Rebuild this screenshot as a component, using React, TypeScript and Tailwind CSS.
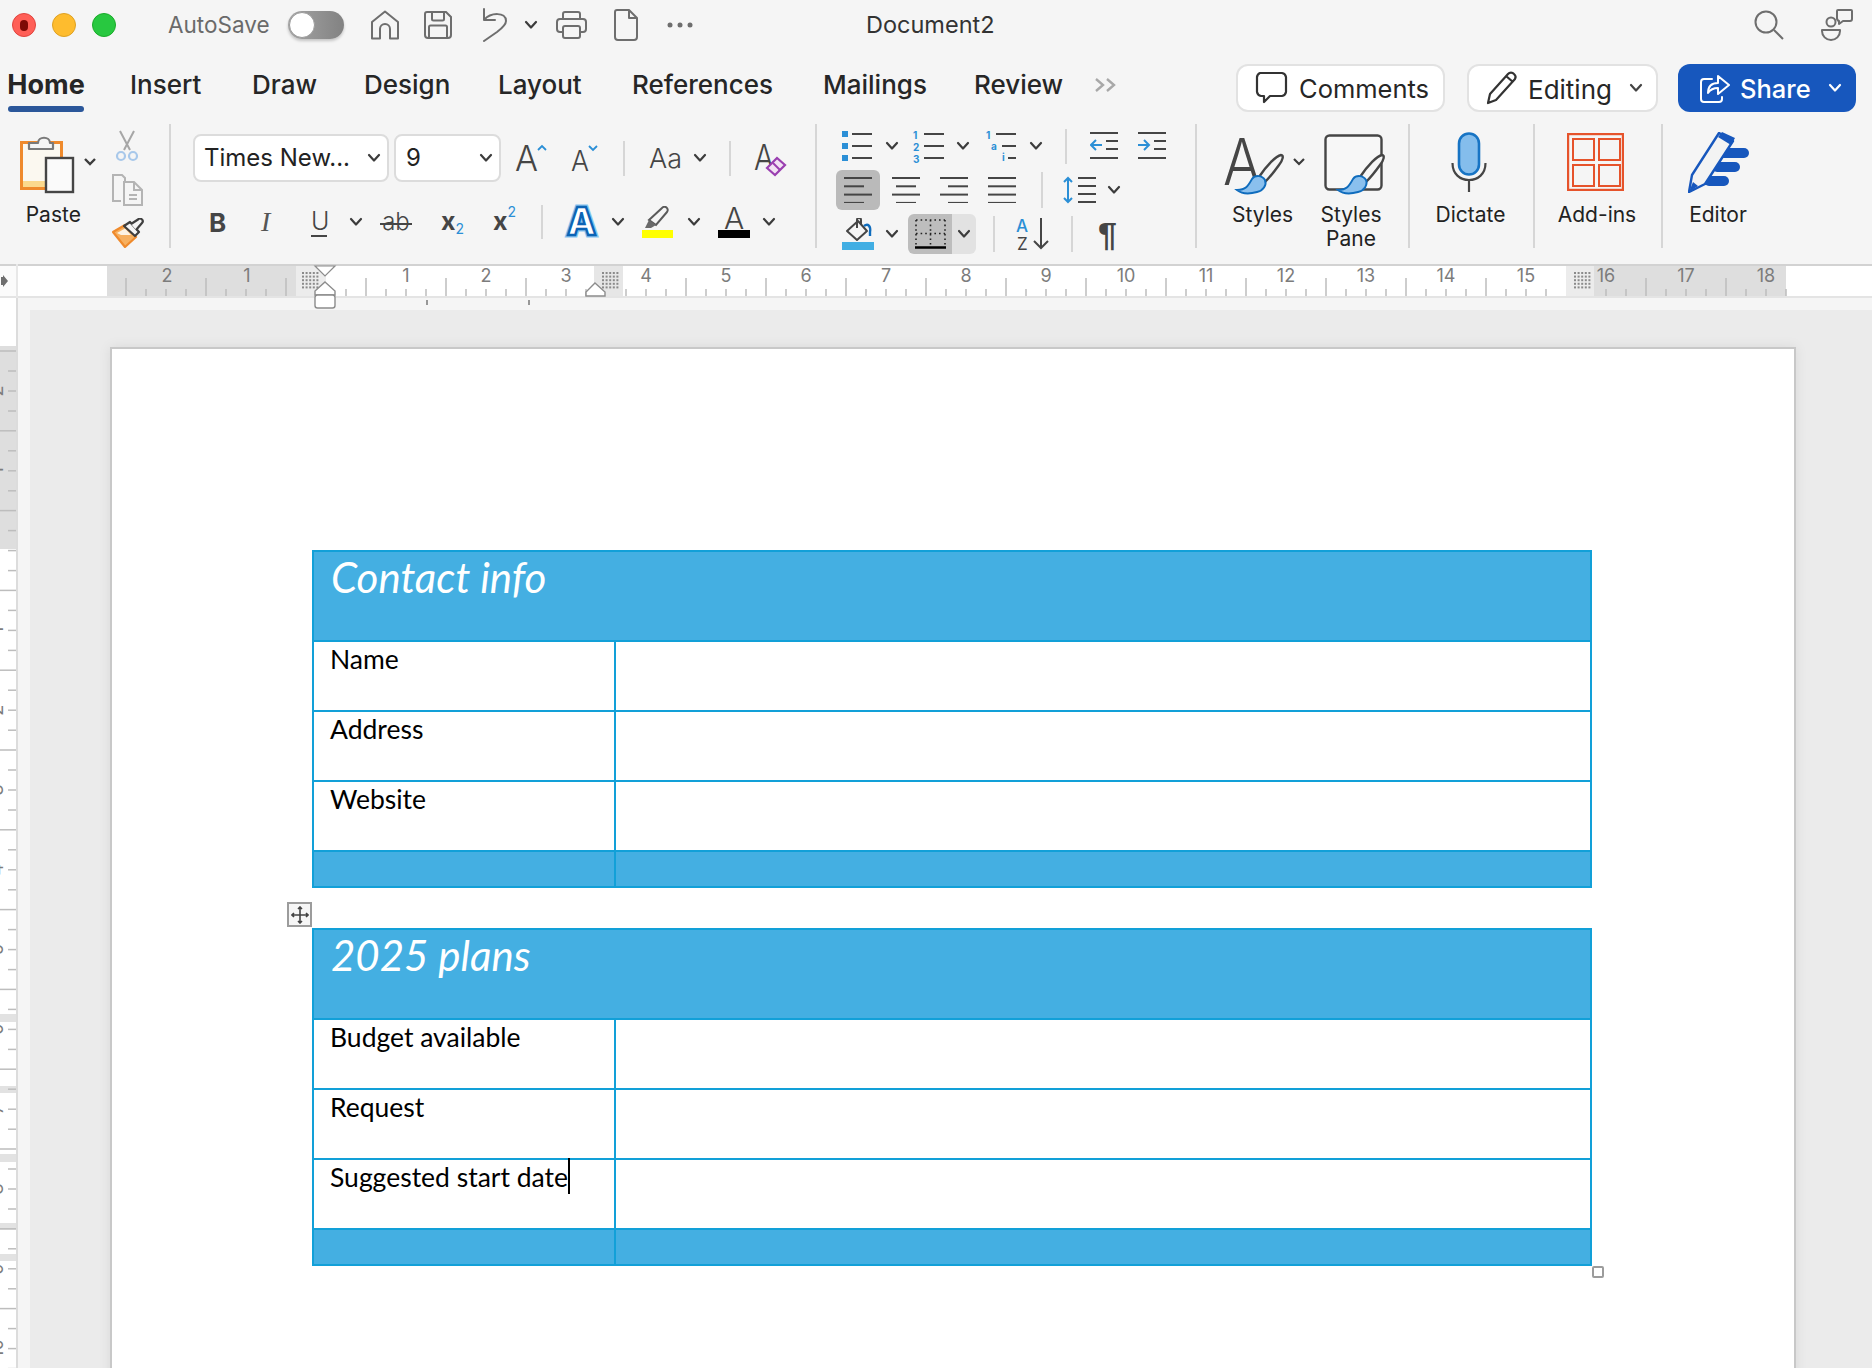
import React from 'react';

const INK = '#454545';
const BLUE = '#2b8fd6';

const Chevron = ({ className = '', color = '#3c3c3c' }: { className?: string; color?: string }) => (
  <svg width="14" height="10" viewBox="0 0 14 10" className={className}>
    <path d="M2 2 L7 7.5 L12 2" fill="none" stroke={color} strokeWidth="2.2" strokeLinecap="round" strokeLinejoin="round" />
  </svg>
);

const Divider = ({ className = '' }: { className?: string }) => <div className={`w-[2px] bg-[#d6d6d6] ${className}`} />;

const Lines = ({ rows, w = 28, gap = 8.3, color = INK }: { rows: number[][]; w?: number; gap?: number; color?: string }) => (
  <svg width={w} height={(rows.length - 1) * gap + 2} className="shrink-0">
    {rows.map((r, i) => (
      <line key={i} x1={r[0]} x2={r[1]} y1={i * gap + 1} y2={i * gap + 1} stroke={color} strokeWidth="2" />
    ))}
  </svg>
);

const Brush = ({ dx = 0, dy = 0 }: { dx?: number; dy?: number }) => (
  <g transform={`translate(${dx} ${dy})`}>
    <path d="M35 43 C43 31 52 22 57 21 C60 21 59 26 55 31 C50 38 46 43 41 48 Z" fill="#f5f5f5" stroke="#454545" strokeWidth="2.4" strokeLinejoin="round" />
    <path d="M13 56 C22 56 24 52 28 45 C31 41 38 41 41 46 C43 51 39 57 33 58 C26 60 18 60 13 56 Z" fill="#8ac0ee" stroke="#0f6cbd" strokeWidth="2" />
  </g>
);

const Ruler = () => {
  const ticks: number[] = [];
  for (let x = 126; x <= 1786; x += 20) {
    if (x >= 296 && x < 345) continue;
    if (x >= 590 && x < 625) continue;
    if (x >= 1566 && x < 1600) continue;
    ticks.push(x);
  }
  const nums: [string, number][] = [['2', 167], ['1', 247]];
  for (let i = 1; i <= 18; i++) nums.push([String(i), 326 + i * 80]);
  const dots = (x0: number) => {
    const out: React.ReactNode[] = [];
    for (let i = 0; i < 5; i++) {
      for (let j = 0; j < 5; j++) {
        out.push(<rect key={`${x0}-${i}-${j}`} x={x0 + i * 3.6} y={8 + j * 3.6} width="2" height="2" fill="#8a8a8a" />);
      }
    }
    return out;
  };
  return (
    <svg width="1872" height="46" className="relative z-10 block shrink-0 overflow-visible">
      <rect x="0" y="0" width="1872" height="34" fill="#ffffff" />
      <rect x="0" y="0" width="17" height="34" fill="#fbfbfb" />
      <rect x="107" y="2" width="189" height="30" fill="#dedede" />
      <rect x="296" y="2" width="30" height="30" fill="#ececec" />
      <rect x="594" y="2" width="29" height="30" fill="#e6e6e6" />
      <rect x="1566" y="2" width="28" height="30" fill="#ececec" />
      <rect x="1594" y="2" width="192" height="30" fill="#dedede" />
      <rect x="0" y="0" width="1872" height="2" fill="#d2d2d2" />
      <rect x="0" y="32" width="1872" height="2" fill="#e4e4e4" />
      <rect x="16" y="0" width="2" height="34" fill="#e8e8e8" />
      {ticks.map((x) => {
        const tall = Math.abs(x - 326) % 80 === 40;
        return <line key={x} x1={x} x2={x} y1={tall ? 14 : 25} y2="32" stroke="#bdbdbd" strokeWidth="1.5" />;
      })}
      {nums.map(([n, x], i) => (
        <text key={i} x={x} y="18" textAnchor="middle" fontSize="18" fill="#7c7c7c" fontFamily="Inter, sans-serif">{n}</text>
      ))}
      {dots(302)}
      {dots(602)}
      {dots(1574)}
      <path d="M1 13 L3 13 L3 11 L8 17 L3 23 L3 21 L1 21 Z" fill="#6e6e6e" />
      <path d="M315 2 L335 2 L325 12 Z" fill="#fff" stroke="#8c8c8c" strokeWidth="1.2" />
      <path d="M325 18 L335 27 L335 31 L315 31 L315 27 Z" fill="#fff" stroke="#8c8c8c" strokeWidth="1.4" />
      <rect x="315" y="31" width="20" height="13" rx="2.5" fill="#fff" stroke="#8c8c8c" strokeWidth="1.4" />
      <path d="M595 19 L605 28 L605 32 L586 32 L586 28 Z" fill="#fff" stroke="#8c8c8c" strokeWidth="1.4" />
      <line x1="427" x2="427" y1="36" y2="41" stroke="#777" strokeWidth="1.5" />
      <line x1="529" x2="529" y1="36" y2="41" stroke="#777" strokeWidth="1.5" />
    </svg>
  );
};

const SideRuler = () => {
  const base = 298;
  const long: number[] = [];
  const short: number[] = [];
  for (let i = 0; i < 14; i++) {
    const y = 351 + i * 79.8 - base;
    long.push(y);
    short.push(y + 20, y + 40, y + 60);
  }
  const labels = ['2', '1', '', '1', '2', '3', '4', '5', '6', '7', '8', '9', '10'];
  const bands = [[1014, 8], [1086, 7], [1154, 8], [1223, 7], [1254, 7]];
  return (
    <svg width="18" height="1070" className="block shrink-0">
      <rect width="16" height="1070" fill="#ffffff" />
      <rect y={346 - base} width="16" height="203" fill="#dedede" />
      {bands.map(([y, h]) => (
        <rect key={y} y={y - base} width="18" height={h} fill="#e2e2e2" />
      ))}
      <rect x="16" width="2" height="1070" fill="#dcdcdc" />
      {long.map((y) => (
        <line key={y} x1="0" x2="16" y1={y} y2={y} stroke="#bdbdbd" strokeWidth="1.5" />
      ))}
      {short.map((y) => (
        <line key={y} x1="8" x2="16" y1={y} y2={y} stroke="#bdbdbd" strokeWidth="1.5" />
      ))}
      {labels.map((l, i) =>
        l ? (
          <text key={i} transform={`translate(3 ${391 + i * 79.8 - base}) rotate(-90)`} textAnchor="middle" fontSize="18" fill="#7c7c7c" fontFamily="Inter, sans-serif">{l}</text>
        ) : null,
      )}
    </svg>
  );
};

const TitleBar = () => (
  <div className="flex h-[50px] shrink-0 items-center pl-[12px] pr-[19px]">
    <div className="flex h-[24px] w-[24px] items-center justify-center rounded-full border border-[#e0443e] bg-[#ff5f57]">
      <div className="h-[11px] w-[8px] rounded-full bg-[#7d0a06]" />
    </div>
    <div className="ml-[16px] h-[24px] w-[24px] rounded-full border border-[#dea123] bg-[#febc2e]" />
    <div className="ml-[16px] h-[24px] w-[24px] rounded-full border border-[#1aab29] bg-[#28c840]" />
    <span className="ml-[52px] w-[100px] text-[22.5px] whitespace-nowrap text-[#6a6a6a]">AutoSave</span>
    <div className="ml-[20px] flex h-[28px] w-[56px] items-center rounded-full bg-gradient-to-r from-[#a5a5a5] to-[#828282] shadow-[0_2px_3px_rgba(0,0,0,0.2)]">
      <div className="ml-[1px] h-[26px] w-[26px] rounded-full border border-[#9a9a9a] bg-white" />
    </div>
    <svg width="30" height="30" viewBox="0 0 30 30" className="ml-[26px]">
      <path d="M2 28.5 V12 L15 1.5 L28 12 V28.5 H20 V19 a5 5 0 0 0 -10 0 V28.5 Z" fill="none" stroke="#6e6e6e" strokeWidth="2" strokeLinejoin="round" />
    </svg>
    <svg width="28" height="28" viewBox="0 0 28 28" className="ml-[24px]">
      <path d="M3 1 H22 L27 6 V24 a3 3 0 0 1 -3 3 H4 a3 3 0 0 1 -3 -3 V3 a2 2 0 0 1 2 -2 Z" fill="none" stroke="#6e6e6e" strokeWidth="2" />
      <path d="M8 1 V8 a1.5 1.5 0 0 0 1.5 1.5 H18.5 a1.5 1.5 0 0 0 1.5 -1.5 V1 M5 27 V16 a1.5 1.5 0 0 1 1.5 -1.5 H21.5 a1.5 1.5 0 0 1 1.5 1.5 V27" fill="none" stroke="#6e6e6e" strokeWidth="2" />
    </svg>
    <svg width="28" height="34" viewBox="0 0 28 34" className="ml-[28px]">
      <path d="M9 1 V12 H20 M9 12 C16 4 31 4 31 13 C31 17 26 21 22 24 L9 33" fill="none" stroke="#6e6e6e" strokeWidth="2" strokeLinecap="round" strokeLinejoin="round" transform="translate(-5 0)" />
    </svg>
    <Chevron className="ml-[16px]" />
    <svg width="31" height="28" viewBox="0 0 31 28" className="ml-[18px]">
      <path d="M7 8 V3 a2 2 0 0 1 2 -2 H22 a2 2 0 0 1 2 2 V8" fill="none" stroke="#6e6e6e" strokeWidth="2" />
      <path d="M7 21 H4 a3 3 0 0 1 -3 -3 V11 a3 3 0 0 1 3 -3 H27 a3 3 0 0 1 3 3 V18 a3 3 0 0 1 -3 3 H24" fill="none" stroke="#6e6e6e" strokeWidth="2" />
      <rect x="7" y="15" width="17" height="12" rx="2" fill="none" stroke="#6e6e6e" strokeWidth="2" />
    </svg>
    <svg width="24" height="32" viewBox="0 0 24 32" className="ml-[27px]">
      <path d="M3 1 H15 L23 9 V28 a3 3 0 0 1 -3 3 H4 a3 3 0 0 1 -3 -3 V3 a2 2 0 0 1 2 -2 Z M15 1 V9 H23" fill="none" stroke="#6e6e6e" strokeWidth="2" strokeLinejoin="round" />
    </svg>
    <svg width="26" height="6" viewBox="0 0 26 6" className="ml-[29px]">
      <circle cx="3" cy="3" r="2.5" fill="#6e6e6e" />
      <circle cx="13" cy="3" r="2.5" fill="#6e6e6e" />
      <circle cx="23" cy="3" r="2.5" fill="#6e6e6e" />
    </svg>
    <span className="ml-[173px] w-[130px] text-[23.5px] whitespace-nowrap text-[#333]">Document2</span>
    <svg width="30" height="30" viewBox="0 0 30 30" className="ml-auto">
      <circle cx="12" cy="12" r="10.5" fill="none" stroke="#6e6e6e" strokeWidth="2" />
      <line x1="20" y1="20" x2="29" y2="29" stroke="#6e6e6e" strokeWidth="2" />
    </svg>
    <svg width="32" height="32" viewBox="0 0 32 32" className="ml-[37px]">
      <circle cx="10" cy="13" r="4.5" fill="none" stroke="#6e6e6e" strokeWidth="2" />
      <path d="M1 21 H19 V22 a9 9 0 0 1 -18 0 Z" fill="none" stroke="#6e6e6e" strokeWidth="2" strokeLinejoin="round" />
      <path d="M17 1 H30 a1 1 0 0 1 1 1 V10 a2 2 0 0 1 -2 2 H22 L18 15 V12 a3 3 0 0 1 -2 -3 V2 a1 1 0 0 1 1 -1 Z" fill="#f5f5f5" stroke="#6e6e6e" strokeWidth="2" strokeLinejoin="round" />
    </svg>
  </div>
);

const TabsBar = () => (
  <div className="flex h-[62px] shrink-0 pr-[16px] text-[#262626]">
    <div className="ml-[8px] flex w-[76px] flex-col items-center">
      <span className="mt-[19px] text-[27px] leading-[32px] font-bold">Home</span>
      <div className="mt-auto h-[6px] w-full rounded-full bg-[#2b579a]" />
    </div>
    <span className="mt-[19px] ml-[46px] w-[72px] text-[26px] leading-[32px] font-medium whitespace-nowrap">Insert</span>
    <span className="mt-[19px] ml-[50px] w-[63px] text-[26px] leading-[32px] font-medium whitespace-nowrap">Draw</span>
    <span className="mt-[19px] ml-[49px] w-[86px] text-[26px] leading-[32px] font-medium whitespace-nowrap">Design</span>
    <span className="mt-[19px] ml-[48px] w-[83px] text-[26px] leading-[32px] font-medium whitespace-nowrap">Layout</span>
    <span className="mt-[19px] ml-[51px] w-[139px] text-[26px] leading-[32px] font-medium whitespace-nowrap">References</span>
    <span className="mt-[19px] ml-[52px] w-[102px] text-[26px] leading-[32px] font-medium whitespace-nowrap">Mailings</span>
    <span className="mt-[19px] ml-[49px] w-[88px] text-[26px] leading-[32px] font-medium whitespace-nowrap">Review</span>
    <svg width="24" height="16" viewBox="0 0 24 16" className="mt-[27px] ml-[32px]">
      <path d="M2 2 L9 8 L2 14 M13 2 L20 8 L13 14" fill="none" stroke="#a8a8a8" strokeWidth="2.4" />
    </svg>
    <div className="mt-[14px] ml-auto flex h-[48px] w-[209px] items-center rounded-[12px] border-2 border-[#e2e2e2] bg-white pl-[17px] text-[25.5px] text-[#262626]">
      <svg width="34" height="36" viewBox="0 0 34 36">
        <path d="M5 3 H27 a5 5 0 0 1 4 4 V22 a5 5 0 0 1 -4 4 H15 L9 32 V26 H6 a5 5 0 0 1 -4 -4 V7 a5 5 0 0 1 3 -4 Z" fill="none" stroke="#333" strokeWidth="2.2" strokeLinejoin="round" />
      </svg>
      <span className="mt-[2px] ml-[10px] whitespace-nowrap">Comments</span>
    </div>
    <div className="mt-[14px] ml-[22px] flex h-[48px] w-[191px] items-center rounded-[12px] border-2 border-[#e2e2e2] bg-white pl-[17px] text-[26px] text-[#262626]">
      <svg width="32" height="34" viewBox="0 0 32 34">
        <path d="M2 32 L4 23 L22 3 a4 4 0 0 1 6 0 a4 4 0 0 1 1 5 L10 29 Z M20 5 L27 11" fill="none" stroke="#333" strokeWidth="2.2" strokeLinejoin="round" />
      </svg>
      <span className="mt-[2px] ml-[10px] whitespace-nowrap">Editing</span>
      <Chevron className="ml-[17px]" color="#444" />
    </div>
    <div className="mt-[14px] ml-[20px] flex h-[48px] w-[178px] items-center rounded-[12px] bg-[#1757bd] pl-[22px] text-[25.5px] font-medium text-white">
      <svg width="30" height="30" viewBox="0 0 30 30">
        <path d="M12 6 H4 a3 3 0 0 0 -3 3 V26 a3 3 0 0 0 3 3 H19 a3 3 0 0 0 3 -3 V24" fill="none" stroke="#fff" strokeWidth="2" strokeLinecap="round" />
        <path d="M8 20 C8 13 12 10 18 10 V3 L29 12 L18 21 V15 C13 15 10 17 8 20 Z" fill="none" stroke="#fff" strokeWidth="2" strokeLinejoin="round" />
      </svg>
      <span className="mt-[2px] ml-[10px] whitespace-nowrap">Share</span>
      <Chevron className="ml-[17px]" color="#fff" />
    </div>
  </div>
);

const ClipboardGroup = () => (
  <div className="flex w-[171px] shrink-0">
    <div className="flex w-[108px] flex-col">
      <svg width="80" height="71" viewBox="0 0 80 71" className="mt-[20px] ml-[18px]">
        <rect x="3.5" y="10.5" width="40" height="46" fill="#fbd98d" stroke="#ef8a2c" strokeWidth="3" />
        <rect x="5" y="12" width="37" height="37" fill="#fbf8f0" />
        <path d="M11 11 H20 C20 4 32 4 32 11 H35 V17 H11 Z" fill="#f5f5f5" stroke="#7a7a7a" strokeWidth="2.2" strokeLinejoin="round" />
        <rect x="28" y="26" width="27" height="34" fill="#fafafa" stroke="#454545" strokeWidth="2.4" />
        <path d="M67 27 L72 32 L77 27" fill="none" stroke="#3c3c3c" strokeWidth="2.4" />
      </svg>
      <span className="text-center text-[21px] leading-[24px] text-[#222]">Paste</span>
    </div>
    <div className="flex w-[40px] flex-col pt-[18px]">
      <svg width="32" height="32" viewBox="0 0 32 32" className="ml-[4px]">
        <path d="M9 1 L19 20 M23 1 L13 20" stroke="#a6a6a6" strokeWidth="2" />
        <circle cx="10" cy="26" r="4" fill="none" stroke="#a8c8ea" strokeWidth="2.2" />
        <circle cx="22" cy="26" r="4" fill="none" stroke="#a8c8ea" strokeWidth="2.2" />
      </svg>
      <svg width="32" height="32" viewBox="0 0 32 32" className="mt-[12px] ml-[4px]">
        <path d="M10 27 H2 V1 H11 L14 4 V8" fill="none" stroke="#b4b4b4" strokeWidth="2" />
        <path d="M13 8 H23 L31 16 V31 H13 Z M23 8 V16 H31 M18 21 H26 M18 25 H26" fill="#f5f5f5" stroke="#b4b4b4" strokeWidth="2" />
      </svg>
      <svg width="32" height="30" viewBox="0 0 32 30" className="mt-[12px] ml-[5px]">
        <path d="M1 14 L13 7 L24 19 L13 29 Z" fill="#f7b05f" stroke="#ef8a2c" strokeWidth="2.2" strokeLinejoin="round" />
        <path d="M5 15 L13 10.5 L19 17 L9 17 Z" fill="#fdf3e3" />
        <path d="M12 8 L18 4 L27 14 L23 18 Z" fill="#f5f5f5" stroke="#3f3f3f" strokeWidth="2.2" strokeLinejoin="round" />
        <path d="M19 6 L26 1.5 a2.5 2.5 0 0 1 4 3.5 L24 12" fill="#f5f5f5" stroke="#3f3f3f" strokeWidth="2.2" strokeLinejoin="round" />
      </svg>
    </div>
    <Divider className="mt-[12px] ml-[23px] h-[124px]" />
  </div>
);

const SelectBox = ({ label, className }: { label: string; className: string }) => (
  <div className={`flex h-[48px] items-center justify-between rounded-[8px] border-2 border-[#dcdcdc] bg-white ${className}`}>
    <span className="text-[24px] whitespace-nowrap text-[#222]">{label}</span>
    <Chevron />
  </div>
);

const FontGroup = () => (
  <div className="ml-[2px] flex w-[642px] shrink-0 flex-col">
    <div className="mt-[22px] flex h-[48px] items-center">
      <SelectBox label="Times New..." className="ml-[20px] w-[196px] pr-[6px] pl-[9px]" />
      <SelectBox label="9" className="ml-[5px] w-[107px] pr-[6px] pl-[10px]" />
      <svg width="32" height="28" viewBox="0 0 32 28" className="ml-[14px] overflow-visible">
        <text x="0" y="27" fontSize="36" fontWeight="300" fill={INK} fontFamily="Inter, sans-serif" textLength="23" lengthAdjust="spacingAndGlyphs">A</text>
        <path d="M23 6 L27 2 L31 6" fill="none" stroke={BLUE} strokeWidth="1.8" />
      </svg>
      <svg width="28" height="28" viewBox="0 0 28 28" className="ml-[24px] overflow-visible">
        <text x="0" y="27" fontSize="29" fontWeight="300" fill={INK} fontFamily="Inter, sans-serif" textLength="18" lengthAdjust="spacingAndGlyphs">A</text>
        <path d="M18 2 L22 6 L26 2" fill="none" stroke={BLUE} strokeWidth="1.8" />
      </svg>
      <Divider className="ml-[24px] h-[35px]" />
      <span className="mt-[3px] ml-[24px] w-[32px] text-[27px] font-light whitespace-nowrap text-[#454545]">Aa</span>
      <Chevron className="ml-[12px]" />
      <Divider className="ml-[22px] h-[35px]" />
      <svg width="34" height="34" viewBox="0 0 34 34" className="mt-[6px] ml-[23px] overflow-visible">
        <text x="0" y="26" fontSize="36" fontWeight="300" fill={INK} fontFamily="Inter, sans-serif" textLength="20" lengthAdjust="spacingAndGlyphs">A</text>
        <path d="M13 24 L23 14 L31 21 L21 31 Z" fill="#f2e3f4" stroke="#9a3fb0" strokeWidth="2.2" />
        <path d="M19 19 L26 26" stroke="#9a3fb0" strokeWidth="2" />
      </svg>
    </div>
    <div className="mt-[20px] flex h-[40px] items-center">
      <span className="ml-[36px] w-[15px] text-[26px] font-bold text-[#454545]">B</span>
      <span className="ml-[37px] w-[14px] font-['Liberation_Serif',serif] text-[28px] text-[#555] italic">I</span>
      <span className="ml-[36px] w-[16px] border-b-2 border-[#454545] text-center text-[25px] leading-[27px] font-light text-[#454545]">U</span>
      <Chevron className="ml-[22px]" />
      <span className="relative ml-[17px] w-[32px] text-center text-[24px] font-light text-[#454545]">
        ab
        <span className="absolute top-[19px] left-0 h-[2px] w-[32px] bg-[#454545]" />
      </span>
      <span className="ml-[29px] flex w-[21px] items-baseline text-[25px] font-bold text-[#454545]">
        x<sub className="text-[14px] font-normal text-[#2b8fd6]">2</sub>
      </span>
      <span className="ml-[31px] flex w-[21px] items-start text-[25px] font-bold text-[#454545]">
        x<sup className="top-[9px] text-[14px] font-normal text-[#2b8fd6]">2</sup>
      </span>
      <Divider className="ml-[27px] h-[34px]" />
      <svg width="31" height="32" viewBox="0 0 31 32" className="ml-[23px] overflow-visible">
        <text x="15.5" y="29" textAnchor="middle" fontSize="38" fontWeight="800" fill="#fff" stroke="#86c4ef" strokeWidth="5" fontFamily="Inter, sans-serif">A</text>
        <text x="15.5" y="29" textAnchor="middle" fontSize="38" fontWeight="800" fill="#fff" stroke="#0c64b5" strokeWidth="2.4" fontFamily="Inter, sans-serif">A</text>
      </svg>
      <Chevron className="ml-[14px]" />
      <svg width="31" height="32" viewBox="0 0 31 32" className="ml-[17px]">
        <path d="M7 14 L20 2 a3 3 0 0 1 5 4 L14 19 Z" fill="#f5f5f5" stroke="#5a5a5a" strokeWidth="2" />
        <path d="M7 14 L14 19 L9 22 H3 Z" fill="#6a6a6a" />
        <rect x="0" y="24" width="31" height="8" fill="#ffff00" />
      </svg>
      <Chevron className="ml-[14px]" />
      <svg width="32" height="32" viewBox="0 0 32 32" className="ml-[17px] overflow-visible">
        <text x="16" y="23" textAnchor="middle" fontSize="30" fontWeight="300" fill={INK} fontFamily="Inter, sans-serif">A</text>
        <rect x="0" y="24" width="32" height="8" fill="#000" />
      </svg>
      <Chevron className="ml-[12px]" />
    </div>
  </div>
);

const ParagraphGroup = () => (
  <div className="flex w-[378px] shrink-0 flex-col">
    <div className="mt-[16px] flex h-[36px] items-center">
      <svg width="30" height="30" className="ml-[25px]">
        {[0, 12, 24].map((y) => (
          <g key={y}>
            <rect x="0" y={y} width="6" height="6" fill={BLUE} />
            <line x1="10" x2="30" y1={y + 3} y2={y + 3} stroke={INK} strokeWidth="2" />
          </g>
        ))}
      </svg>
      <Chevron className="ml-[13px]" />
      <svg width="31" height="34" className="ml-[14px] overflow-visible">
        {['1', '2', '3'].map((n, i) => (
          <g key={n}>
            <text x="0" y={10 + i * 12} fontSize="10" fontWeight="700" fill={BLUE} fontFamily="Inter, sans-serif">{n}</text>
            <line x1="11" x2="31" y1={5 + i * 12} y2={5 + i * 12} stroke={INK} strokeWidth="2" />
          </g>
        ))}
      </svg>
      <Chevron className="ml-[12px]" />
      <svg width="30" height="34" className="ml-[16px] overflow-visible">
        <text x="0" y="10" fontSize="10" fontWeight="700" fill={BLUE} fontFamily="Inter, sans-serif">1</text>
        <line x1="10" x2="30" y1="5" y2="5" stroke={INK} strokeWidth="2" />
        <text x="5" y="21" fontSize="10" fontWeight="700" fill={BLUE} fontFamily="Inter, sans-serif">a</text>
        <line x1="16" x2="30" y1="17" y2="17" stroke={INK} strokeWidth="2" />
        <text x="16" y="32" fontSize="10" fontWeight="700" fill={BLUE} fontFamily="Inter, sans-serif">i</text>
        <line x1="22" x2="30" y1="29" y2="29" stroke={INK} strokeWidth="2" />
      </svg>
      <Chevron className="ml-[13px]" />
      <Divider className="ml-[22px] h-[35px]" />
      <svg width="28" height="28" className="ml-[23px]">
        <line x1="0" x2="28" y1="1" y2="1" stroke={INK} strokeWidth="2" />
        <line x1="16" x2="28" y1="9" y2="9" stroke={INK} strokeWidth="2" />
        <line x1="16" x2="28" y1="17" y2="17" stroke={INK} strokeWidth="2" />
        <line x1="0" x2="28" y1="26" y2="26" stroke={INK} strokeWidth="2" />
        <path d="M12 13 H1 M6 8 L1 13 L6 18" fill="none" stroke={BLUE} strokeWidth="2" />
      </svg>
      <svg width="28" height="28" className="ml-[20px]">
        <line x1="0" x2="28" y1="1" y2="1" stroke={INK} strokeWidth="2" />
        <line x1="16" x2="28" y1="9" y2="9" stroke={INK} strokeWidth="2" />
        <line x1="16" x2="28" y1="17" y2="17" stroke={INK} strokeWidth="2" />
        <line x1="0" x2="28" y1="26" y2="26" stroke={INK} strokeWidth="2" />
        <path d="M0 13 H11 M6 8 L11 13 L6 18" fill="none" stroke={BLUE} strokeWidth="2" />
      </svg>
    </div>
    <div className="mt-[6px] flex h-[40px] items-center">
      <div className="ml-[19px] flex h-[40px] w-[44px] items-center justify-center rounded-[6px] bg-[#bababa]">
        <Lines rows={[[0, 28], [0, 20], [0, 28], [0, 20]]} />
      </div>
      <div className="ml-[12px]"><Lines rows={[[0, 28], [4, 24], [0, 28], [4, 24]]} /></div>
      <div className="ml-[20px]"><Lines rows={[[0, 28], [8, 28], [0, 28], [8, 28]]} /></div>
      <div className="ml-[20px]"><Lines rows={[[0, 28], [0, 28], [0, 28], [0, 28]]} /></div>
      <Divider className="ml-[25px] h-[36px]" />
      <svg width="33" height="28" className="ml-[20px]">
        <path d="M5 2 V26 M1 6 L5 2 L9 6 M1 22 L5 26 L9 22" fill="none" stroke={BLUE} strokeWidth="2" />
        <line x1="15" x2="33" y1="2" y2="2" stroke={INK} strokeWidth="2" />
        <line x1="15" x2="33" y1="10" y2="10" stroke={INK} strokeWidth="2" />
        <line x1="15" x2="33" y1="18" y2="18" stroke={INK} strokeWidth="2" />
        <line x1="15" x2="33" y1="26" y2="26" stroke={INK} strokeWidth="2" />
      </svg>
      <Chevron className="ml-[11px]" />
    </div>
    <div className="mt-[4px] flex h-[40px] items-center">
      <svg width="32" height="32" viewBox="0 0 32 32" className="ml-[25px]">
        <path d="M5 13 L16 3 L25 13 L15 22 Z" fill="#f5f5f5" stroke={INK} strokeWidth="2" strokeLinejoin="round" />
        <path d="M15 10 V2 a2 2 0 0 1 4 0 V7" fill="none" stroke={INK} strokeWidth="2" />
        <path d="M22 8 C26 5 29 8 28 14 V18" fill="none" stroke="#0f6cbd" strokeWidth="2.4" />
        <rect x="0" y="24" width="32" height="8" fill="#41aee3" />
      </svg>
      <Chevron className="ml-[11px]" />
      <div className="ml-[9px] flex h-[40px] w-[68px] overflow-hidden rounded-[6px]">
        <div className="flex w-[44px] items-center justify-center bg-[#bdbdbd]">
          <svg width="31" height="30" viewBox="0 0 31 30">
            <path d="M1 1 H30 M1 1 V28 M30 1 V28 M1 14.5 H30 M15.5 1 V28" fill="none" stroke="#222" strokeWidth="1.6" strokeDasharray="1.6 3" />
            <line x1="0" x2="31" y1="28.5" y2="28.5" stroke="#000" strokeWidth="2.4" />
          </svg>
        </div>
        <div className="flex w-[24px] items-center justify-center bg-[#e2e2e2]">
          <Chevron />
        </div>
      </div>
      <Divider className="ml-[17px] h-[36px]" />
      <svg width="32" height="34" viewBox="0 0 32 34" className="ml-[21px] overflow-visible">
        <text x="0" y="15" fontSize="17" fontWeight="500" fill={BLUE} fontFamily="Inter, sans-serif">A</text>
        <text x="1" y="33" fontSize="17" fontWeight="400" fill={INK} fontFamily="Inter, sans-serif">Z</text>
        <path d="M25 1 V31 M18 24 L25 31 L32 24" fill="none" stroke={INK} strokeWidth="2" />
      </svg>
      <Divider className="ml-[23px] h-[36px]" />
      <span className="ml-[25px] font-['Liberation_Sans',sans-serif] text-[34px] leading-none font-bold text-[#454545]">¶</span>
    </div>
  </div>
);

const RibbonLabel = ({ children, className = '' }: { children: React.ReactNode; className?: string }) => (
  <span className={`text-[21px] leading-[24px] text-[#222] ${className}`}>{children}</span>
);

const Ribbon = () => (
  <div className="flex h-[152px] shrink-0">
    <ClipboardGroup />
    <FontGroup />
    <Divider className="mt-[12px] h-[124px]" />
    <ParagraphGroup />
    <Divider className="mt-[12px] h-[124px]" />
    <div className="flex w-[211px] shrink-0">
      <div className="flex w-[116px] flex-col">
        <div className="h-[91px] pt-[22px] pl-[27px]">
          <svg width="82" height="62" viewBox="0 0 82 62" className="overflow-visible">
            <text x="-1" y="51" fontSize="64" fontWeight="300" fill={INK} fontFamily="Inter, sans-serif" textLength="38" lengthAdjust="spacingAndGlyphs">A</text>
            <Brush />
            <path d="M70 25 L75 30 L80 25" fill="none" stroke="#3c3c3c" strokeWidth="2.2" />
          </svg>
        </div>
        <RibbonLabel className="ml-[35px]">Styles</RibbonLabel>
      </div>
      <div className="flex w-[95px] flex-col">
        <div className="h-[91px] pt-[22px] pl-[11px]">
          <svg width="64" height="62" viewBox="0 0 64 62">
            <rect x="1.5" y="1.5" width="56" height="54" rx="4" fill="#f7f7f7" stroke={INK} strokeWidth="2.4" />
            <Brush dx="1" />
          </svg>
        </div>
        <RibbonLabel className="w-[76px] text-center">Styles Pane</RibbonLabel>
      </div>
    </div>
    <Divider className="mt-[12px] h-[124px]" />
    <div className="flex w-[123px] shrink-0 flex-col items-center">
      <div className="-ml-[5px] h-[91px] pt-[20px]">
        <svg width="36" height="61" viewBox="0 0 36 61">
          <rect x="8" y="1.5" width="20" height="41" rx="10" fill="#84bdec" stroke="#1774c4" strokeWidth="2.6" />
          <path d="M1.5 31 C1.5 42 9 48 18 48 C27 48 34.5 42 34.5 31 M18 48 V60" fill="none" stroke={INK} strokeWidth="2.2" />
        </svg>
      </div>
      <RibbonLabel className="-ml-[2px]">Dictate</RibbonLabel>
    </div>
    <Divider className="mt-[12px] h-[124px]" />
    <div className="flex w-[126px] shrink-0 flex-col items-center">
      <div className="-ml-[6px] h-[91px] pt-[21px]">
        <svg width="57" height="58" viewBox="0 0 57 58">
          <rect x="1" y="1" width="55" height="56" fill="none" stroke="#e6532b" strokeWidth="2.4" />
          <rect x="6" y="6" width="21" height="21" fill="none" stroke="#e6532b" strokeWidth="2" />
          <rect x="32" y="6" width="21" height="21" fill="none" stroke="#e6532b" strokeWidth="2" />
          <rect x="6" y="32" width="21" height="21" fill="none" stroke="#e6532b" strokeWidth="2" />
          <rect x="32" y="32" width="21" height="21" fill="none" stroke="#e6532b" strokeWidth="2" />
        </svg>
      </div>
      <RibbonLabel className="-ml-[2px]">Add-ins</RibbonLabel>
    </div>
    <Divider className="mt-[12px] h-[124px]" />
    <div className="flex w-[110px] shrink-0 flex-col items-center">
      <div className="h-[91px] pt-[20px]">
        <svg width="61" height="61" viewBox="0 0 61 61">
          <rect x="30" y="16" width="31" height="10" rx="5" fill="#1757bd" />
          <rect x="24" y="30" width="28" height="10" rx="5" fill="#1757bd" />
          <rect x="16" y="44" width="25" height="10" rx="5" fill="#1757bd" />
          <path d="M1 60 L4 43 L31 1 L45 9 L17 52 Z" fill="#f3f3f3" stroke="#1757bd" strokeWidth="2.4" strokeLinejoin="round" />
          <path d="M34 0 L47 6 L43 13 L30 5 Z" fill="#1757bd" />
          <path d="M1 60 L5 50 L10 54 Z" fill="#1757bd" />
        </svg>
      </div>
      <RibbonLabel>Editor</RibbonLabel>
    </div>
  </div>
);

const Row = ({ label, caret = false }: { label: string; caret?: boolean }) => (
  <div className="flex h-[70px] border-t-2 border-[#12a0d8]">
    <div className="w-[302px] border-r-2 border-[#12a0d8] pt-[1px] pl-[16px] text-[26.5px] leading-[32px] text-black">
      <span className="relative">
        {label}
        {caret && <span className="absolute top-[-3px] left-full h-[36px] w-[2px] bg-black" />}
      </span>
    </div>
  </div>
);

const InfoTable = ({ title, rows, caretRow }: { title: string; rows: string[]; caretRow?: number }) => (
  <div className="w-[1280px] border-2 border-[#12a0d8]">
    <div className="h-[88px] bg-[#44afe2] pt-[1px] pl-[17px] text-[42px] leading-[48px] font-normal text-white italic">{title}</div>
    {rows.map((r, i) => (
      <Row key={r} label={r} caret={i === caretRow} />
    ))}
    <div className="flex h-[36px] border-t-2 border-[#12a0d8] bg-[#44afe2]">
      <div className="w-[302px] border-r-2 border-[#12a0d8]" />
    </div>
  </div>
);

export default function App() {
  return (
    <div className="flex h-[1368px] w-[1872px] flex-col overflow-hidden bg-[#f5f5f5] font-['Inter',sans-serif]">
      <TitleBar />
      <TabsBar />
      <Ribbon />
      <Ruler />
      <div className="-mt-[12px] flex flex-1 overflow-hidden">
        <SideRuler />
        <div className="mt-[12px] ml-[12px] flex-1 bg-[#ebebeb] pt-[37px] pl-[80px]">
          <div className="relative h-[1100px] w-[1686px] border-2 border-[#c8c8c8] bg-white pt-[201px] pl-[200px] font-['Lato',sans-serif] shadow-[0_0_12px_rgba(0,0,0,0.08)]">
            <InfoTable title="Contact info" rows={['Name', 'Address', 'Website']} />
            <div className="relative mt-[40px] w-[1280px]">
              <InfoTable title="2025 plans" rows={['Budget available', 'Request', 'Suggested start date']} caretRow={2} />
              <div className="absolute -top-[26px] -left-[25px] flex h-[25px] w-[25px] items-center justify-center border-2 border-[#9c9c9c] bg-[#f6f6f6]">
                <svg width="18" height="18" viewBox="0 0 18 18">
                  <path d="M9 1 V17 M1 9 H17 M7 3 L9 1 L11 3 M7 15 L9 17 L11 15 M3 7 L1 9 L3 11 M15 7 L17 9 L15 11" fill="none" stroke="#444" strokeWidth="1.6" />
                </svg>
              </div>
              <div className="absolute top-full left-full h-[12px] w-[12px] rounded-[2px] border-2 border-[#9c9c9c] bg-white" />
            </div>
          </div>
        </div>
      </div>
    </div>
  );
}
